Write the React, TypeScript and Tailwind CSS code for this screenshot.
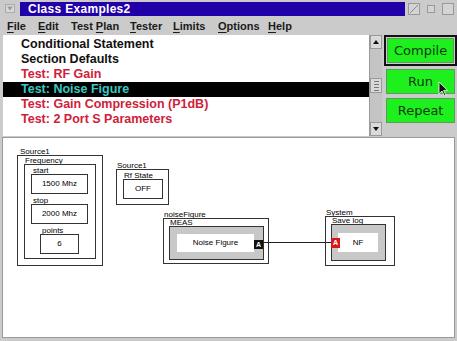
import React from 'react';

const items = [
    { label: 'Conditional Statement', color: 'text-[#111111]' },
    { label: 'Section Defaults', color: 'text-[#111111]' },
    { label: 'Test: RF Gain', color: 'text-[#d0203a]' },
    { label: 'Test: Noise Figure', color: 'text-[#3cc8c0]', selected: true },
    { label: 'Test: Gain Compression (P1dB)', color: 'text-[#d0203a]' },
    { label: 'Test: 2 Port S Parameters', color: 'text-[#d0203a]' },
];

const menus = [
    { pre: '', u: 'F', post: 'ile', w: 'w-[31px]' },
    { pre: '', u: 'E', post: 'dit', w: 'w-[33px]' },
    { pre: 'Test ', u: 'P', post: 'lan', w: 'w-[59px]' },
    { pre: '', u: 'T', post: 'ester', w: 'w-[43px]' },
    { pre: '', u: 'L', post: 'imits', w: 'w-[45px]' },
    { pre: '', u: 'O', post: 'ptions', w: 'w-[50px]' },
    { pre: '', u: 'H', post: 'elp', w: 'w-[30px]' },
];

// tiny caption above a box on the canvas
function Cap({ children, className = '' }: { children: React.ReactNode; className?: string }) {
    return <div className={`h-[7px] leading-[7px] text-[8px] text-black whitespace-nowrap ${className}`}>{children}</div>;
}

function Field({ label, value, className = '' }: { label: string; value: string; className?: string }) {
    return (
        <div className={`flex flex-col ${className}`}>
            <div className="h-[5px] leading-[4px] text-[8px] pl-[2px]">{label}</div>
            <div className="h-[20px] border border-[#333] flex items-center justify-center text-[8px]">{value}</div>
        </div>
    );
}

function GreenButton({ label, def }: { label: string; def?: boolean }) {
    return (
        <div className={def ? 'border-2 border-[#111] p-px' : 'px-[2px] py-[1px]'}>
            <div
                className="h-[25px] bg-[#1ef01e] border border-[#5a9a5a] flex items-center justify-center text-[13px] text-[#0e3a0e]"
                style={{ fontFamily: '"DejaVu Sans", sans-serif' }}
            >
                {label}
            </div>
        </div>
    );
}

export default function App() {
    return (
        <div className="w-[457px] h-[341px] bg-[#cbcbcb] flex flex-col overflow-hidden select-none" style={{ fontFamily: '"Liberation Sans", Arial, sans-serif' }}>
            {/* title bar */}
            <div className="h-[17px] flex items-center">
                <div className="w-[20px] flex justify-center">
                    <svg width="10" height="9" viewBox="0 0 10 9">
                        <rect x="0.5" y="0.5" width="9" height="8" fill="#d8d8d8" stroke="#aaa" />
                        <path d="M2 2.5 L8 2.5 L5 6.5 Z" fill="#9a9a9a" />
                    </svg>
                </div>
                <div className="w-[385px] h-[14px] bg-[#2200a8] flex items-center pl-[8px] text-[12px] font-bold text-white tracking-[0.3px]">
                    Class Examples2
                </div>
                <div className="flex items-center gap-[7px] ml-[3px]">
                    <svg width="12" height="12" viewBox="0 0 12 12">
                        <rect x="0.5" y="0.5" width="11" height="11" fill="#d4d4d4" stroke="#999" />
                        <path d="M2 10 L10 2" stroke="#888" />
                    </svg>
                    <svg width="8" height="8" viewBox="0 0 8 8">
                        <rect x="0.5" y="0.5" width="7" height="7" fill="#d4d4d4" stroke="#999" />
                    </svg>
                    <svg width="12" height="12" viewBox="0 0 12 12">
                        <rect x="0.5" y="0.5" width="11" height="11" fill="#d4d4d4" stroke="#999" />
                    </svg>
                </div>
            </div>

            {/* menu bar */}
            <div className="h-[18px] flex items-center pl-[7px] text-[11px] font-bold text-[#1a1a1a]">
                {menus.map((m) => (
                    <div key={m.u + m.post} className={m.w}>
                        {m.pre}
                        <span className="underline underline-offset-2">{m.u}</span>
                        {m.post}
                    </div>
                ))}
            </div>

            {/* list + buttons */}
            <div className="h-[101px] flex">
                <div className="w-[367px] ml-[3px] bg-white pt-[2px] text-[12.5px] font-bold">
                    {items.map((it) => (
                        <div
                            key={it.label}
                            className={`h-[15px] leading-[15px] pl-[18px] ${it.color} ${it.selected ? 'bg-black' : ''}`}
                        >
                            {it.label}
                        </div>
                    ))}
                </div>
                <div className="w-[13px] bg-[#c4c4c4] border-l border-[#9a9a9a] flex flex-col justify-between">
                    <div className="h-[14px] bg-[#dadada] border border-[#9a9a9a] flex items-center justify-center">
                        <svg width="6" height="4" viewBox="0 0 6 4"><path d="M0 4 L3 0 L6 4 Z" fill="#111" /></svg>
                    </div>
                    <div className="h-[15px] bg-[#dadada] border border-[#9a9a9a] flex flex-col items-center justify-center gap-[2px]">
                        <div className="w-[5px] h-px bg-[#777]" />
                        <div className="w-[5px] h-px bg-[#777]" />
                        <div className="w-[5px] h-px bg-[#777]" />
                        <div className="w-[5px] h-px bg-[#777]" />
                    </div>
                    <div className="h-[14px] bg-[#dadada] border border-[#9a9a9a] flex items-center justify-center">
                        <svg width="6" height="4" viewBox="0 0 6 4"><path d="M0 0 L3 4 L6 0 Z" fill="#111" /></svg>
                    </div>
                </div>
                <div className="w-[73px] ml-[2px] flex flex-col gap-[2px] relative">
                    <GreenButton label="Compile" def />
                    <GreenButton label="Run" />
                    <GreenButton label="Repeat" />
                    <svg className="absolute left-[54px] top-[46px]" width="11" height="16" viewBox="0 0 11 16">
                        <path d="M1 1 L1 13 L4 10 L6.5 15 L8 14.3 L5.6 9.4 L9.6 9.4 Z" fill="#111" stroke="#fff" strokeWidth="0.8" />
                    </svg>
                </div>
            </div>

            {/* canvas */}
            <div className="mt-[1px] h-[201px] mx-[2px] border border-[#9a9a9a] bg-white relative text-black">
                {/* Source1 / Frequency */}
                <div className="absolute left-[14px] top-[10px] flex flex-col">
                    <Cap className="pl-[3px]">Source1</Cap>
                    <div className="w-[86px] h-[111px] border border-[#333] pl-[6px] pt-[1px] flex flex-col">
                        <Cap className="pl-[1px]">Frequency</Cap>
                        <div className="w-[72px] h-[95px] border border-[#333] pl-[6px] pt-[4px] flex flex-col">
                            <Field label="start" value="1500 Mhz" className="w-[57px]" />
                            <Field label="stop" value="2000 Mhz" className="w-[57px] mt-[5px]" />
                            <Field label="points" value="6" className="w-[39px] ml-[9px] mt-[5px]" />
                        </div>
                    </div>
                </div>

                {/* Source1 / Rf State */}
                <div className="absolute left-[113px] top-[24px] flex flex-col">
                    <Cap className="pl-[1px]">Source1</Cap>
                    <div className="w-[53px] h-[36px] border border-[#333] pl-[6px] pt-[2px] flex flex-col">
                        <Cap className="pl-[1px]">Rf State</Cap>
                        <div className="w-[40px] h-[20px] border border-[#333] flex items-center justify-center text-[8px]">OFF</div>
                    </div>
                </div>

                {/* noiseFigure */}
                <div className="absolute left-[160px] top-[73px] flex flex-col">
                    <Cap className="pl-[1px]">noiseFigure</Cap>
                    <div className="w-[106px] h-[46px] border border-[#333] px-[5px] flex flex-col">
                        <Cap className="pl-[1px]">MEAS</Cap>
                        <div className="w-[95px] h-[34px] border border-[#333] bg-[#c8c8c8] pl-[7px] pt-[7px] flex items-start">
                            <div className="w-[77px] h-[18px] bg-white flex items-center justify-center text-[8px]">Noise Figure</div>
                            <div className="w-[9px] h-[9px] mt-[6px] bg-[#111] text-white text-[7px] leading-[9px] text-center font-bold">A</div>
                        </div>
                    </div>
                </div>

                {/* connector */}
                <svg className="absolute left-[260px] top-[103px]" width="70" height="3">
                    <line x1="0" y1="1.5" x2="70" y2="1.5" stroke="#222" strokeWidth="1" />
                </svg>

                {/* System / Save log */}
                <div className="absolute left-[322px] top-[71px] flex flex-col">
                    <Cap className="pl-[1px]">System</Cap>
                    <div className="w-[70px] h-[50px] border border-[#333] px-[5px] flex flex-col">
                        <Cap className="pl-[1px]">Save log</Cap>
                        <div className="relative w-[55px] h-[37px] border border-[#333] bg-[#c8c8c8] pl-[6px] pt-[8px]">
                            <div className="w-[40px] h-[19px] bg-white flex items-center justify-center text-[8px]">NF</div>
                            <div className="absolute left-[-1px] top-[13px] w-[9px] h-[10px] bg-[#d81818] text-white text-[7px] leading-[10px] text-center font-bold">A</div>
                        </div>
                    </div>
                </div>
            </div>
        </div>
    );
}
